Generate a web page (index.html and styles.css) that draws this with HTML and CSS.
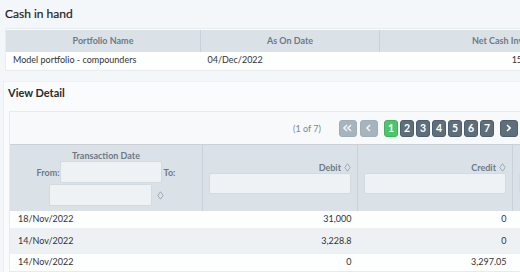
FILE: index.html
```html
<!DOCTYPE html>
<html>
<head>
  <title>Portfolio Cash</title>
  <link rel="stylesheet" href="styles.css">
</head>
<body>
  <div class="page">
    <h3 class="section-title">Cash in hand</h3>
    <div class="summary-box">
      <table class="summary-table">
        <thead>
          <tr>
            <th class="col-name">Portfolio Name</th>
            <th class="col-asof">As On Date</th>
            <th class="col-cash">Net Cash Invested</th>
          </tr>
        </thead>
        <tbody>
          <tr>
            <td>Model portfolio - compounders</td>
            <td>04/Dec/2022</td>
            <td class="num">151,250</td>
          </tr>
        </tbody>
      </table>
    </div>

    <div class="panel">
      <h3 class="panel-title">View Detail</h3>
      <div class="datatable">
        <div class="paginator">
          <span class="page-info">(1 of 7)</span>
          <span class="pager-buttons">
            <button class="pg-nav disabled">
              <svg width="9" height="8" viewBox="0 0 9 8"><path d="M4 1 L1 4 L4 7 M8 1 L5 4 L8 7" fill="none" stroke="#eef2f4" stroke-width="1.6"/></svg>
            </button>
            <button class="pg-nav disabled">
              <svg width="5" height="8" viewBox="0 0 5 8"><path d="M4 1 L1 4 L4 7" fill="none" stroke="#eef2f4" stroke-width="1.6"/></svg>
            </button>
            <span class="pg-pages">
              <button class="pg-num active">1</button>
              <button class="pg-num">2</button>
              <button class="pg-num">3</button>
              <button class="pg-num">4</button>
              <button class="pg-num">5</button>
              <button class="pg-num">6</button>
              <button class="pg-num">7</button>
            </span>
            <button class="pg-nav">
              <svg width="5" height="8" viewBox="0 0 5 8"><path d="M1 1 L4 4 L1 7" fill="none" stroke="#ffffff" stroke-width="1.6"/></svg>
            </button>
            <button class="pg-nav">
              <svg width="9" height="8" viewBox="0 0 9 8"><path d="M1 1 L4 4 L1 7 M5 1 L8 4 L5 7" fill="none" stroke="#ffffff" stroke-width="1.6"/></svg>
            </button>
          </span>
        </div>

        <table class="detail-table">
          <thead>
            <tr>
              <th class="col-txdate">
                <div class="th-title">Transaction Date</div>
                <div class="range-line"><label>From:</label><input class="filter-input range-input" type="text"><label class="to-label">To:</label></div>
                <div class="range-line"><input class="filter-input range-input second" type="text"><svg class="sort-icon" width="7" height="9" viewBox="0 0 7 9"><path d="M3.5 0.8 L6.2 4.5 L3.5 8.2 L0.8 4.5 Z" fill="none" stroke="#97a4af" stroke-width="0.9"/></svg></div>
              </th>
              <th class="col-amount">
                <div class="th-label">Debit <svg class="sort-icon" width="7" height="9" viewBox="0 0 7 9"><path d="M3.5 0.8 L6.2 4.5 L3.5 8.2 L0.8 4.5 Z" fill="none" stroke="#97a4af" stroke-width="0.9"/></svg></div>
                <input class="filter-input wide" type="text">
              </th>
              <th class="col-amount">
                <div class="th-label">Credit <svg class="sort-icon" width="7" height="9" viewBox="0 0 7 9"><path d="M3.5 0.8 L6.2 4.5 L3.5 8.2 L0.8 4.5 Z" fill="none" stroke="#97a4af" stroke-width="0.9"/></svg></div>
                <input class="filter-input wide" type="text">
              </th>
              <th class="col-amount">
                <div class="th-label">Balance <svg class="sort-icon" width="7" height="9" viewBox="0 0 7 9"><path d="M3.5 0.8 L6.2 4.5 L3.5 8.2 L0.8 4.5 Z" fill="none" stroke="#97a4af" stroke-width="0.9"/></svg></div>
                <input class="filter-input wide" type="text">
              </th>
              <th class="col-amount">
                <div class="th-label">Narration <svg class="sort-icon" width="7" height="9" viewBox="0 0 7 9"><path d="M3.5 0.8 L6.2 4.5 L3.5 8.2 L0.8 4.5 Z" fill="none" stroke="#97a4af" stroke-width="0.9"/></svg></div>
                <input class="filter-input wide" type="text">
              </th>
            </tr>
          </thead>
          <tbody>
            <tr>
              <td>18/Nov/2022</td>
              <td class="num">31,000</td>
              <td class="num">0</td>
              <td class="num">31,000</td>
              <td>Cash added</td>
            </tr>
            <tr class="alt">
              <td>14/Nov/2022</td>
              <td class="num">3,228.8</td>
              <td class="num">0</td>
              <td class="num">27,771.2</td>
              <td>Buy</td>
            </tr>
            <tr>
              <td>14/Nov/2022</td>
              <td class="num">0</td>
              <td class="num">3,297.05</td>
              <td class="num">31,068.25</td>
              <td>Sell</td>
            </tr>
          </tbody>
        </table>
      </div>
    </div>
  </div>
</body>
</html>
```

FILE: styles.css
```css
html, body {
  margin: 0;
  overflow: hidden;
}

body {
  font-family: Lato, "Open Sans", sans-serif;
  background-color: #f4f7f9;
  color: #333;
}

.page {
  padding-top: 6px;
  width: 900px;
}

.section-title {
  margin: 0 0 6px 5px;
  font-size: 12px;
  line-height: 16px;
  font-weight: normal;
  color: #1d1d1d;
  -webkit-text-stroke: 0.2px #1d1d1d;
}

.summary-box {
  margin-left: 5px;
  border: 1px solid #e8edf0;
  background-color: #fafbfc;
  padding: 1px 0;
  width: 700px;
}

table {
  border-collapse: collapse;
  font-size: 9px;
}

.summary-table th {
  background-color: #dbe2e7;
  color: #6b7a87;
  font-weight: bold;
  font-size: 9px;
  line-height: 12px;
  padding: 5px 7px;
  border-left: 1px solid #c9d2d9;
  text-align: center;
}

.summary-table th:first-child {
  border-left: none;
}

.summary-table td {
  background-color: #fdfefe;
  line-height: 12px;
  padding: 2px 7px 3px;
}

.col-name { width: 180px; }
.col-asof { width: 164px; }
.col-cash { width: 158px; text-align: right !important; }

.num {
  text-align: right;
}

.panel {
  margin-top: 10px;
  margin-left: 3px;
  padding: 4px 5px 0;
  border-left: 1px solid #e9eef1;
  border-top: 1px solid #eef2f4;
  background-color: #f9fbfc;
}

.panel-title {
  margin: 0 0 11px -1px;
  font-size: 11px;
  line-height: 14px;
  font-weight: bold;
  color: #2a2a2a;
}

.datatable {
  display: inline-block;
  border: 1px solid #e6ebee;
  background-color: #f7f9fb;
}

.paginator {
  display: flex;
  align-items: center;
  justify-content: center;
  height: 32px;
  gap: 18px;
}

.page-info {
  font-size: 9px;
  color: #7b8895;
}

.pager-buttons {
  display: flex;
  align-items: center;
  gap: 3px;
}

.pg-pages {
  display: flex;
  gap: 2px;
  margin: 0 3px;
}

button {
  font-family: inherit;
  padding: 0;
  margin: 0;
  cursor: pointer;
}

.pg-nav {
  width: 18px;
  height: 17px;
  border: 1px solid #4e5e6a;
  border-radius: 3px;
  background-color: #5e6f7b;
  display: flex;
  align-items: center;
  justify-content: center;
}

.pg-nav.disabled {
  background-color: #a8b4bd;
  border-color: #a0adb6;
}

.pg-num {
  width: 14px;
  height: 17px;
  border: 1px solid #4e5e6a;
  border-radius: 3px;
  background-color: #5e6f7b;
  color: #fff;
  font-weight: bold;
  font-size: 10.5px;
  line-height: 15px;
}

.pg-num.active {
  background-color: #4fc46d;
  border-color: #41b35e;
}

.detail-table th {
  background-color: #dbe2e7;
  color: #6b7a87;
  font-weight: bold;
  font-size: 9px;
  border-left: 1px solid #c9d2d9;
  border-top: 1px solid #c9d2d9;
  height: 66px;
  padding: 0 6px;
  vertical-align: middle;
}

.detail-table th:first-child {
  border-left: none;
}

.col-txdate {
  width: 180px;
  text-align: center;
}

.col-amount {
  width: 142px;
  text-align: right;
}

.th-title {
  line-height: 11px;
}

.range-line {
  display: flex;
  align-items: center;
  justify-content: center;
  margin-top: 0;
}

.range-line + .range-line {
  margin-top: 1px;
}

.to-label {
  margin-left: 2px;
}

.th-label {
  line-height: 11px;
  display: flex;
  align-items: center;
  justify-content: flex-end;
  gap: 3px;
}

.filter-input {
  box-sizing: border-box;
  height: 22px;
  border: 1px solid #d3dbe1;
  border-radius: 2px;
  background-color: #eef2f5;
  padding: 0 4px;
  margin: 0;
}

.range-input {
  width: 102px;
}

.range-input.second {
  width: 103px;
  margin-right: 5px;
}

.filter-input.wide {
  display: block;
  width: 100%;
  height: 21px;
}

.detail-table td {
  background-color: #fdfefe;
  line-height: 12px;
  padding: 2px 7px 3px 8px;
  color: #333;
}

.detail-table td.num {
  padding-right: 6px;
}

.detail-table tr.alt td {
  background-color: #eef1f4;
  padding-top: 7px;
  padding-bottom: 7px;
}
```
